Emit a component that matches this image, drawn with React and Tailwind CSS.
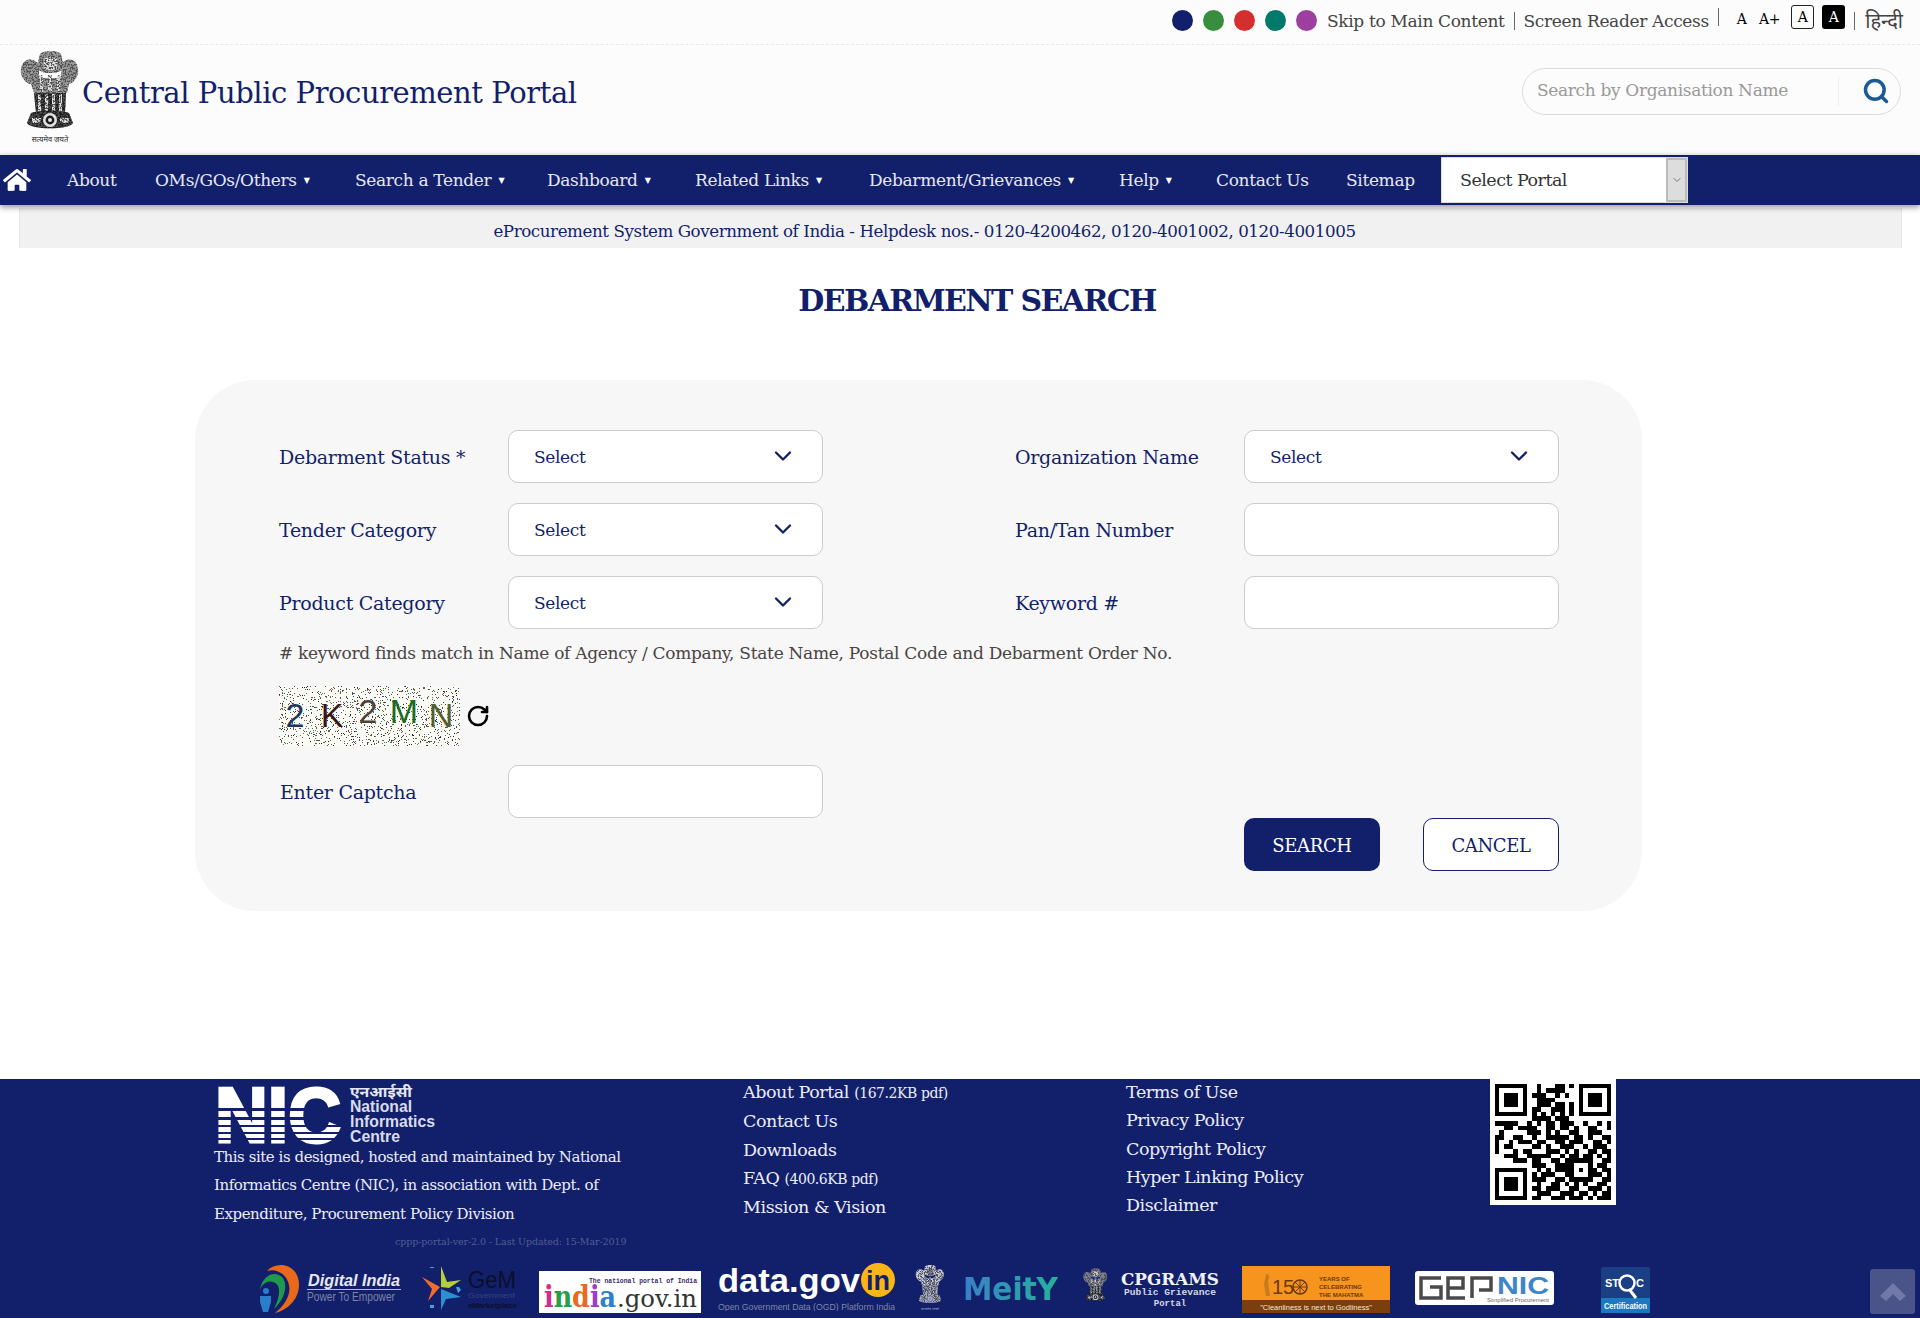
import { useMemo } from 'react';
import { ChevronDown, RotateCw, Search } from 'lucide-react';
import { FaHome } from 'react-icons/fa';

const QR_ROWS = [
  '1111111001000110101111111',
  '1000001001011110001000001',
  '1011101011100101001011101',
  '1011101001111000001011101',
  '1011101001110110101011101',
  '1000001011001110101000001',
  '1111111010101010101111111',
  '0000000011110111000000000',
  '1111100101011011100100101',
  '0011011110011011010011001',
  '0100000111010100110011100',
  '1100110010011111011010011',
  '1001011101100110111001101',
  '1011000011010011100101110',
  '1000101100011101010011011',
  '0011100111110010110110101',
  '0000111011001101111110011',
  '0000000011100111100010110',
  '1111111001010111101011011',
  '1000001010111001100011101',
  '1011101011100110111110011',
  '1011101001001101010100110',
  '1011101011011100110011101',
  '1000001001110011101101011',
  '1111111011001110111010111',
];

const CAPTCHA_LETTERS = [
  { ch: '2', x: 16, y: 41, fill: '#1f3560' },
  { ch: 'K', x: 53, y: 41, fill: '#3b1516' },
  { ch: '2', x: 89, y: 37, fill: '#4b4238' },
  { ch: 'M', x: 125, y: 37, fill: '#1b6b1f' },
  { ch: 'N', x: 162, y: 41, fill: '#56602e' },
];

const DOT_COLORS = ['#222222', '#555555', '#7a6a3a', '#3a4a7a', '#7a3a4a', '#3a7a4a'];

const NAV_ITEMS = [
  { label: 'About', width: 'w-[88px]' },
  { label: 'OMs/GOs/Others', width: 'w-[200px]', caret: true },
  { label: 'Search a Tender', width: 'w-[192px]', caret: true },
  { label: 'Dashboard', width: 'w-[148px]', caret: true },
  { label: 'Related Links', width: 'w-[174px]', caret: true },
  { label: 'Debarment/Grievances', width: 'w-[250px]', caret: true },
  { label: 'Help', width: 'w-[97px]', caret: true },
  { label: 'Contact Us', width: 'w-[130px]' },
  { label: 'Sitemap', width: 'w-[95px]' },
];

const Emblem = ({ className, id, dark = '#1c1c1c', mid = '#9a9a9a', light = '#e2e2e2', motto = true }) => (
  <svg viewBox="0 0 60 94" className={className}>
    <defs>
      <filter id={id} x="0" y="0" width="100%" height="100%">
        <feTurbulence type="fractalNoise" baseFrequency="0.6" numOctaves="2" seed="7" />
        <feColorMatrix values="0 0 0 0 0.08  0 0 0 0 0.08  0 0 0 0 0.08  0 0 0 -7 3.9" />
        <feComposite in2="SourceAlpha" operator="in" result="speck" />
        <feMerge>
          <feMergeNode in="SourceGraphic" />
          <feMergeNode in="speck" />
        </feMerge>
      </filter>
    </defs>
    <g filter={`url(#${id})`}>
      {/* side lions */}
      <path d="M18 12 C10 5 2 9 1 18 C0 25 4 30 9 33 L20 33Z" fill={mid} />
      <path d="M42 12 C50 5 57 9 58 18 C59 25 55 30 50 33 L40 33Z" fill={mid} />
      {/* centre lion */}
      <path d="M20 3 C24 -1 37 -1 41 3 L44 16 C42 24 18 24 17 16Z" fill={mid} />
      <path d="M24 8 C27 6 34 6 37 8 L37 17 C34 20 27 20 24 17Z" fill={light} />
      {/* chests */}
      <path d="M9 27 H50 L47 42 H14Z" fill={mid} />
      <path d="M20 24h3v17h-3zM28 24h4v17h-4zM37 24h3v17h-3z" fill={light} />
      {/* legs */}
      <path d="M14 42h32l-1 20H16Z" fill={dark} />
      <path d="M18 43h3v18h-3zM25 43h3v18h-3zM32 43h3v18h-3zM39 43h3v18h-3z" fill={light} />
      {/* abacus */}
      <path d="M11 62 C18 59 42 59 49 62 L53 72 C50 79 10 79 7 72Z" fill={dark} />
      <path d="M12 67h9v3l-4 2h-5zM40 67h9v5h-5l-4-2z" fill={light} />
    </g>
    <circle cx="30" cy="69" r="7" fill={light} />
    <circle cx="30" cy="69" r="4.4" fill={dark} />
    <circle cx="30" cy="69" r="2" fill={light} />
    {motto && (
      <text x="30" y="91" textAnchor="middle" fontSize="7.5" fill={dark} fontFamily="'Noto Sans','DejaVu Sans',sans-serif">
        सत्यमेव जयते
      </text>
    )}
  </svg>
);

const QrCode = () => (
  <svg viewBox="-1 -1 27 27" className="h-[126px] w-[126px] bg-white" shapeRendering="crispEdges">
    {QR_ROWS.map((row, y) =>
      row.split('').map((cell, x) => (cell === '1' ? <rect key={`${x}-${y}`} x={x} y={y} width="1" height="1" fill="#000" /> : null))
    )}
  </svg>
);

const Captcha = () => {
  const dots = useMemo(() => {
    let seed = 4217;
    const next = () => {
      seed = (seed * 16807) % 2147483647;
      return seed / 2147483647;
    };
    return Array.from({ length: 1300 }, () => ({
      x: Math.floor(next() * 181),
      y: Math.floor(next() * 60),
      fill: DOT_COLORS[Math.floor(next() * DOT_COLORS.length)],
    }));
  }, []);
  return (
    <svg width="181" height="60" viewBox="0 0 181 60" className="bg-[#fbfbf6]">
      {dots.map((d, i) => (
        <rect key={i} x={d.x} y={d.y} width="1" height="1" fill={d.fill} />
      ))}
      {CAPTCHA_LETTERS.map((l, i) => (
        <text key={i} x={l.x} y={l.y} textAnchor="middle" fontSize="34" fill={l.fill} fontFamily="'Liberation Sans',sans-serif">
          {l.ch}
        </text>
      ))}
    </svg>
  );
};

const NicLogo = () => (
  <svg viewBox="0 0 222 60" className="h-[60px] w-[222px] overflow-visible" fontFamily="'Liberation Sans',sans-serif">
    <text x="1" y="58" fontSize="78" fontWeight="700" fill="#fff" stroke="#fff" strokeWidth="3" textLength="126" lengthAdjust="spacingAndGlyphs">NIC</text>
    <rect x="0" y="24" width="130" height="3" fill="#121f6b" />
    <rect x="0" y="33" width="130" height="3" fill="#121f6b" />
    <rect x="0" y="41" width="130" height="2" fill="#121f6b" />
    <rect x="0" y="48" width="130" height="2" fill="#121f6b" />
    <rect x="0" y="54" width="130" height="2" fill="#121f6b" />
    <text x="136" y="13" fontSize="14" fontWeight="700" fill="#e4e7f2" fontFamily="'Noto Sans','DejaVu Sans',sans-serif" textLength="62" lengthAdjust="spacingAndGlyphs">एनआईसी</text>
    <text x="136" y="28" fontSize="16" fontWeight="700" fill="#d9dcea" textLength="62" lengthAdjust="spacingAndGlyphs">National</text>
    <text x="136" y="43" fontSize="16" fontWeight="700" fill="#d9dcea" textLength="85" lengthAdjust="spacingAndGlyphs">Informatics</text>
    <text x="136" y="58" fontSize="16" fontWeight="700" fill="#d9dcea" textLength="50" lengthAdjust="spacingAndGlyphs">Centre</text>
  </svg>
);

const DigitalIndiaLogo = () => (
  <svg viewBox="0 0 146 50" className="h-[50px] w-[146px] overflow-visible" fontFamily="'Liberation Sans',sans-serif">
    <path d="M10 8 C20 -3 42 1 42 22 C42 38 28 48 18 50 C28 42 34 32 32 22 C30 10 18 5 10 8Z" fill="#e8691c" />
    <path d="M3 27 C5 13 17 7 25 14 C31 20 29 35 17 46 C24 32 24 21 16 19 C10 17 5 21 3 27Z" fill="#1f9a4c" />
    <circle cx="9" cy="28" r="3" fill="#2a7dc9" />
    <path d="M3 33h11v6l-3 10h-5l-3-10z" fill="#2a7dc9" />
    <text x="51" y="23" fontSize="16.5" fontWeight="700" fontStyle="italic" fill="#e8e9f4" textLength="92" lengthAdjust="spacingAndGlyphs">Digital India</text>
    <rect x="50" y="26" width="94" height="1" fill="#b8bdd6" />
    <text x="50" y="38" fontSize="12" fill="#7c84aa" textLength="88" lengthAdjust="spacingAndGlyphs">Power To Empower</text>
  </svg>
);

const GemLogo = () => (
  <svg viewBox="0 0 96 50" className="h-[50px] w-[96px] overflow-visible" fontFamily="'Liberation Sans',sans-serif">
    <path d="M19 3 L25 19 L39 17 L27 25 L19 24Z" fill="#b5cf3a" />
    <path d="M0 14 L18 24 L6 38 L10 26Z" fill="#f26b2a" />
    <path d="M19 26 L39 34 L24 36 L19 47Z" fill="#2e8fd0" />
    <path d="M8 4h4v1h-4zM34 24h3l2 3-3 3zM8 42h4v3h-4z" fill="#4aa0d8" />
    <text x="46" y="25" fontSize="24" fill="#0b0f2a" textLength="48" lengthAdjust="spacingAndGlyphs">GeM</text>
    <text x="46" y="35" fontSize="8" fill="#3a4478" textLength="47" lengthAdjust="spacingAndGlyphs">Government</text>
    <text x="46" y="45" fontSize="8" fontWeight="700" fill="#0b0f2a" textLength="49" lengthAdjust="spacingAndGlyphs">eMarketplace</text>
  </svg>
);

const IndiaGovLogo = () => (
  <svg viewBox="0 0 162 42" className="h-[42px] w-[162px] bg-white" fontFamily="'DejaVu Sans',sans-serif">
    <text x="50" y="12" fontSize="8" fontWeight="700" fill="#3b2a6b" textLength="108" lengthAdjust="spacingAndGlyphs" fontFamily="'Liberation Mono',monospace">The national portal of India</text>
    <text x="5" y="36" fontSize="30" fontWeight="700" textLength="72" lengthAdjust="spacingAndGlyphs" fontFamily="'DejaVu Serif',serif">
      <tspan fill="#d22c8c">i</tspan><tspan fill="#2a9d48">n</tspan><tspan fill="#e86a1c">d</tspan><tspan fill="#a03cc8">i</tspan><tspan fill="#2d7fd0">a</tspan>
    </text>
    <text x="78" y="36" fontSize="25" fill="#333" textLength="80" lengthAdjust="spacingAndGlyphs" fontFamily="'DejaVu Serif',serif">.gov.in</text>
  </svg>
);

const DataGovLogo = () => (
  <svg viewBox="0 0 177 48" className="h-[48px] w-[177px]" fontFamily="'Liberation Sans',sans-serif">
    <text x="0" y="29" fontSize="34" fontWeight="700" fill="#fff" textLength="142" lengthAdjust="spacingAndGlyphs">data.gov</text>
    <circle cx="160" cy="17" r="17" fill="#fbb517" />
    <text x="160" y="27" textAnchor="middle" fontSize="27" fontWeight="700" fill="#121f6b">in</text>
    <text x="0" y="47" fontSize="9" fill="#7e86a8" textLength="177" lengthAdjust="spacingAndGlyphs">Open Government Data (OGD) Platform India</text>
  </svg>
);

const MeityLogo = () => (
  <svg viewBox="0 0 95 36" className="h-[36px] w-[95px]">
    <defs>
      <linearGradient id="meity" x1="0" x2="1" y1="0" y2="0">
        <stop offset="0" stopColor="#3a7fc8" />
        <stop offset="1" stopColor="#24b39a" />
      </linearGradient>
    </defs>
    <text x="0" y="29" fontSize="32" fontWeight="700" fill="url(#meity)" textLength="95" lengthAdjust="spacingAndGlyphs" fontFamily="'DejaVu Sans',sans-serif">MeitY</text>
  </svg>
);

const CpgramsLogo = () => (
  <svg viewBox="0 0 100 38" className="h-[38px] w-[100px]">
    <text x="1" y="14" fontSize="17" fontWeight="700" fill="#f1f2f8" textLength="98" lengthAdjust="spacingAndGlyphs" fontFamily="'DejaVu Serif',serif">CPGRAMS</text>
    <text x="4" y="24" fontSize="9" fontWeight="700" fill="#d6d8e6" textLength="92" lengthAdjust="spacingAndGlyphs" fontFamily="'Liberation Mono',monospace">Public Grievance</text>
    <text x="50" y="35" textAnchor="middle" fontSize="9" fontWeight="700" fill="#d6d8e6" fontFamily="'Liberation Mono',monospace">Portal</text>
  </svg>
);

const MahatmaBanner = () => (
  <svg viewBox="0 0 148 47" className="h-[47px] w-[148px]" fontFamily="'Liberation Sans',sans-serif">
    <rect width="148" height="34" fill="#f7941d" />
    <rect y="34" width="148" height="13" fill="#7b3f0d" />
    <path d="M24 8 C28 8 28 12 26 15 L28 30 L24 30 L22 18Z" fill="#c87a1e" />
    <text x="30" y="28" fontSize="20" fill="#6a3a0c">15</text>
    <circle cx="58" cy="21" r="7" fill="none" stroke="#6a3a0c" strokeWidth="1.5" />
    <path d="M58 14v14M51 21h14M53 16l10 10M63 16l-10 10" stroke="#6a3a0c" strokeWidth="1" />
    <text x="77" y="15" fontSize="6" fontWeight="700" fill="#6a3a0c">YEARS OF</text>
    <text x="77" y="23" fontSize="6" fontWeight="700" fill="#6a3a0c">CELEBRATING</text>
    <text x="77" y="31" fontSize="6" fontWeight="700" fill="#6a3a0c">THE MAHATMA</text>
    <text x="74" y="44" textAnchor="middle" fontSize="7.5" fill="#f5e6d0">"Cleanliness is next to Godliness"</text>
  </svg>
);

const GepLogo = () => (
  <svg viewBox="0 0 139 34" className="h-[34px] w-[139px]">
    <rect width="139" height="34" rx="3" fill="#fff" />
    <path d="M26 7H6V27H26V16H15M33 17H48V7H33V27H50M57 27V7H76V19H64" fill="none" stroke="#4a4a4a" strokeWidth="3.5" />
    <text x="82" y="23" fontSize="23" fontWeight="700" fill="#3f86c9" textLength="52" lengthAdjust="spacingAndGlyphs" fontFamily="'Liberation Sans',sans-serif">NIC</text>
    <text x="72" y="31" fontSize="6" fill="#666" textLength="62" lengthAdjust="spacingAndGlyphs" fontFamily="'Liberation Sans',sans-serif">Simplified Procurement</text>
  </svg>
);

const StqcLogo = () => (
  <svg viewBox="0 0 49 46" className="h-[46px] w-[49px]" fontFamily="'Liberation Sans',sans-serif">
    <rect width="49" height="46" rx="2" fill="#1a3f85" />
    <rect y="31" width="49" height="15" fill="#1c78c0" />
    <text x="4" y="20" fontSize="11" fontWeight="700" fill="#fff">ST</text>
    <circle cx="26" cy="16" r="7.5" fill="none" stroke="#fff" strokeWidth="2.5" />
    <path d="M28 22l7 9" stroke="#fff" strokeWidth="3" />
    <text x="35" y="20" fontSize="11" fontWeight="700" fill="#fff">C</text>
    <text x="3" y="42" fontSize="9" fontWeight="700" fill="#fff" textLength="43" lengthAdjust="spacingAndGlyphs">Certification</text>
  </svg>
);

const SelectField = () => (
  <div className="relative h-[53px] w-[315px]">
    <select className="h-full w-full appearance-none rounded-[10px] border border-[#cccccc] bg-white pl-[25px] pt-[2px] text-[17px] tracking-[-0.02em] text-[#121f6b] outline-none">
      <option>Select</option>
    </select>
    <ChevronDown className="pointer-events-none absolute right-[26px] top-[12px] h-[28px] w-[28px] text-[#121f6b]" strokeWidth={2} />
  </div>
);

const TextField = () => (
  <input type="text" className="h-[53px] w-[315px] rounded-[10px] border border-[#cccccc] bg-white px-[25px] outline-none" />
);

const Field = ({ label, children }) => (
  <div className="flex items-center">
    <label className="w-[229px] pt-[2px] text-[19px] tracking-[-0.015em] text-[#121f6b]">{label}</label>
    {children}
  </div>
);

export default function App() {
  return (
    <div className="relative flex h-[1318px] flex-col bg-white font-['DejaVu_Serif',serif]">
      {/* top strip */}
      <div className="flex h-[45px] items-start justify-end border-b border-dashed border-[#e8e8e8] bg-[#fcfcfc] pr-[17px] text-[#444444]">
        <div className="mt-[10px] flex gap-[10px]">
          <span className="h-[21px] w-[21px] rounded-full bg-[#121f6b]" />
          <span className="h-[21px] w-[21px] rounded-full bg-[#388e3c]" />
          <span className="h-[21px] w-[21px] rounded-full bg-[#d32f2f]" />
          <span className="h-[21px] w-[21px] rounded-full bg-[#00796b]" />
          <span className="h-[21px] w-[21px] rounded-full bg-[#9c3f9f]" />
        </div>
        <a className="ml-[10px] mt-[10px] text-[17px] leading-[22px] tracking-[-0.02em]">Skip to Main Content</a>
        <span className="mx-[9px] mt-[12px] h-[18px] w-px bg-[#666666]" />
        <a className="mt-[10px] text-[17px] leading-[22px] tracking-[-0.02em]">Screen Reader Access</a>
        <span className="ml-[9px] mt-[8px] h-[18px] w-px bg-[#666666]" />
        <span className="ml-[18px] mt-[8px] text-[14px] leading-[22px] text-black">A</span>
        <span className="ml-[12px] mt-[8px] text-[14px] leading-[22px] tracking-[-0.02em] text-black">A+</span>
        <span className="ml-[11px] mt-[5px] flex h-[24px] w-[23px] items-center justify-center rounded-[3px] border border-[#222222] text-[14px] text-black">A</span>
        <span className="ml-[8px] mt-[5px] flex h-[24px] w-[23px] items-center justify-center rounded-[3px] bg-black text-[14px] text-white">A</span>
        <span className="ml-[9px] mt-[12px] h-[18px] w-px bg-[#666666]" />
        <span className="ml-[10px] mt-[8px] font-['Noto_Sans','DejaVu_Sans',sans-serif] text-[20px] leading-[26px]">हिन्दी</span>
      </div>

      {/* logo + search */}
      <div className="flex h-[110px] items-center justify-between bg-[#fcfcfc] pl-[20px] pr-[19px]">
        <div className="flex items-center">
          <Emblem id="emblem-main" className="mb-[5px] h-[94px] w-[60px]" />
          <h1 className="ml-[2px] mt-[-12px] text-[29px] font-normal tracking-[-0.015em] text-[#121f6b]">Central Public Procurement Portal</h1>
        </div>
        <div className="mb-[18px] flex h-[47px] w-[379px] items-center rounded-full border border-[#dddddd] bg-[#fcfcfc] pl-[14px]">
          <input placeholder="Search by Organisation Name" className="w-[300px] bg-transparent text-[17px] tracking-[-0.02em] text-[#444444] outline-none placeholder:text-[#999999]" />
          <span className="ml-[1px] h-[29px] w-px bg-[#eeeeee]" />
          <Search className="ml-[23px] h-[28px] w-[28px] text-[#1c5a94]" strokeWidth={3} />
        </div>
      </div>

      {/* nav */}
      <nav className="z-10 flex h-[50px] items-center bg-[#121f6b] text-[#e6e8f2] shadow-[0_2px_6px_rgba(0,0,0,0.45)]">
        <div className="w-[67px] pl-[3px]">
          <FaHome className="h-[30px] w-[28px] text-white" />
        </div>
        {NAV_ITEMS.map((item) => (
          <a key={item.label} className={`${item.width} flex items-center whitespace-nowrap pt-[1px] text-[17px] tracking-[-0.02em]`}>
            {item.label}
            {item.caret && <span className="ml-[7px] text-[8px] text-white">▼</span>}
          </a>
        ))}
        <div className="flex h-[46px] w-[247px] border border-[#dddddd] bg-white">
          <span className="flex-1 pl-[18px] text-[17.5px] leading-[44px] tracking-[-0.03em] text-[#333333]">Select Portal</span>
          <span className="flex w-[21px] items-center justify-center border-2 border-[#bbbbbb] bg-[#dddddd]">
            <ChevronDown className="h-[12px] w-[12px] text-[#777777]" />
          </span>
        </div>
      </nav>

      {/* helpdesk strip */}
      <div className="mx-[19px] mt-[3px] flex h-[40px] w-[1883px] items-center justify-center border-x border-[#e6e6e6] bg-[#f1f1f1] pt-[8px] text-[16.7px] tracking-[-0.025em] text-[#121f6b]">
        <span className="ml-[-72px]">eProcurement System Government of India - Helpdesk nos.- 0120-4200462, 0120-4001002, 0120-4001005</span>
      </div>

      <h2 className="ml-[34px] mt-[32px] w-[1886px] text-center text-[30px] font-bold leading-[42px] tracking-[-0.055em] text-[#121f6b]">DEBARMENT SEARCH</h2>

      {/* form card */}
      <div className="ml-[195px] mt-[58px] h-[531px] w-[1447px] rounded-[60px] bg-[#f7f7f7] pl-[84px] pr-[83px] pt-[50px]">
        <div className="grid grid-cols-[544px_736px] gap-x-[0px] gap-y-[20px] [&>*:nth-child(2n)]:ml-[192px]">
          <Field label="Debarment Status *"><SelectField /></Field>
          <Field label="Organization Name"><SelectField /></Field>
          <Field label="Tender Category"><SelectField /></Field>
          <Field label="Pan/Tan Number"><TextField /></Field>
          <Field label="Product Category"><SelectField /></Field>
          <Field label="Keyword #"><TextField /></Field>
        </div>
        <p className="mt-[13px] whitespace-nowrap text-[17px] leading-[22px] tracking-[-0.017em] text-[#4a4444]">
          # keyword finds match in Name of Agency / Company, State Name, Postal Code and Debarment Order No.
        </p>
        <div className="mt-[22px] flex items-center">
          <Captcha />
          <RotateCw className="ml-[6px] h-[24px] w-[24px] text-black" strokeWidth={2.6} />
        </div>
        <div className="mt-[19px] flex items-center">
          <label className="w-[229px] pl-px pt-[2px] text-[19px] tracking-[-0.015em] text-[#121f6b]">Enter Captcha</label>
          <TextField />
        </div>
        <div className="flex justify-end gap-[43px]">
          <button className="h-[53px] w-[136px] rounded-[10px] bg-[#121f6b] pt-[2px] text-[18px] tracking-[-0.02em] text-white">SEARCH</button>
          <button className="h-[53px] w-[136px] rounded-[10px] border border-[#121f6b] bg-white pt-[2px] text-[18px] tracking-[-0.02em] text-[#121f6b]">CANCEL</button>
        </div>
      </div>

      {/* footer */}
      <footer className="mt-auto h-[239px] bg-[#121f6b] text-[#eceef6]">
        <div className="grid grid-cols-[529px_383px_364px_126px] pl-[214px]">
          <div>
            <div className="pt-[5px]"><NicLogo /></div>
            <p className="mt-[-1px] w-[440px] text-[15px] leading-[28.3px] tracking-[-0.03em]">
              This site is designed, hosted and maintained by National Informatics Centre (NIC), in association with Dept. of Expenditure, Procurement Policy Division
            </p>
            <p className="ml-[181px] mt-[7px] text-[9.5px] leading-[14px] tracking-[-0.01em] text-[#525d92]">cppp-portal-ver-2.0 - Last Updated: 15-Mar-2019</p>
          </div>
          <ul className="mt-[-1px] text-[17.5px] leading-[28.25px] tracking-[-0.025em]">
            <li>About Portal <span className="text-[14px]">(167.2KB pdf)</span></li>
            <li>Contact Us</li>
            <li>Downloads</li>
            <li>FAQ <span className="text-[14px]">(400.6KB pdf)</span></li>
            <li>Mission &amp; Vision</li>
          </ul>
          <ul className="mt-[-1px] text-[17.5px] leading-[28.25px] tracking-[-0.025em]">
            <li>Terms of Use</li>
            <li>Privacy Policy</li>
            <li>Copyright Policy</li>
            <li>Hyper Linking Policy</li>
            <li>Disclaimer</li>
          </ul>
          <QrCode />
        </div>
        <div className="mt-[14px] flex items-end pl-[257px]">
          <DigitalIndiaLogo />
          <div className="ml-[19px]"><GemLogo /></div>
          <div className="ml-[21px]"><IndiaGovLogo /></div>
          <div className="mb-[2px] ml-[17px]"><DataGovLogo /></div>
          <div className="mb-[2px] ml-[15px]">
            <Emblem id="emblem-meity" className="h-[46px] w-[40px]" dark="#aab0c8" mid="#c9cddd" light="#7a80a8" />
          </div>
          <div className="mb-[6px] ml-[13px]"><MeityLogo /></div>
          <div className="mb-[4px] ml-[25px]">
            <Emblem id="emblem-cpgrams" className="h-[42px] w-[25px]" dark="#1d2230" mid="#7a7f95" light="#c7c9d6" motto={false} />
          </div>
          <div className="mb-[4px] ml-[12px]"><CpgramsLogo /></div>
          <div className="ml-[22px]"><MahatmaBanner /></div>
          <div className="mb-[8px] ml-[25px]"><GepLogo /></div>
          <div className="ml-[47px]"><StqcLogo /></div>
        </div>
      </footer>

      {/* back to top */}
      <button className="absolute left-[1870px] top-[1269px] flex h-[45px] w-[45px] items-center justify-center rounded-[3px] bg-[#4a5488]">
        <svg viewBox="0 0 28 20" className="h-[20px] w-[28px]">
          <path d="M14 1 L27 14 L21 19 L14 12 L7 19 L1 14Z" fill="#7079a8" />
        </svg>
      </button>
    </div>
  );
}
